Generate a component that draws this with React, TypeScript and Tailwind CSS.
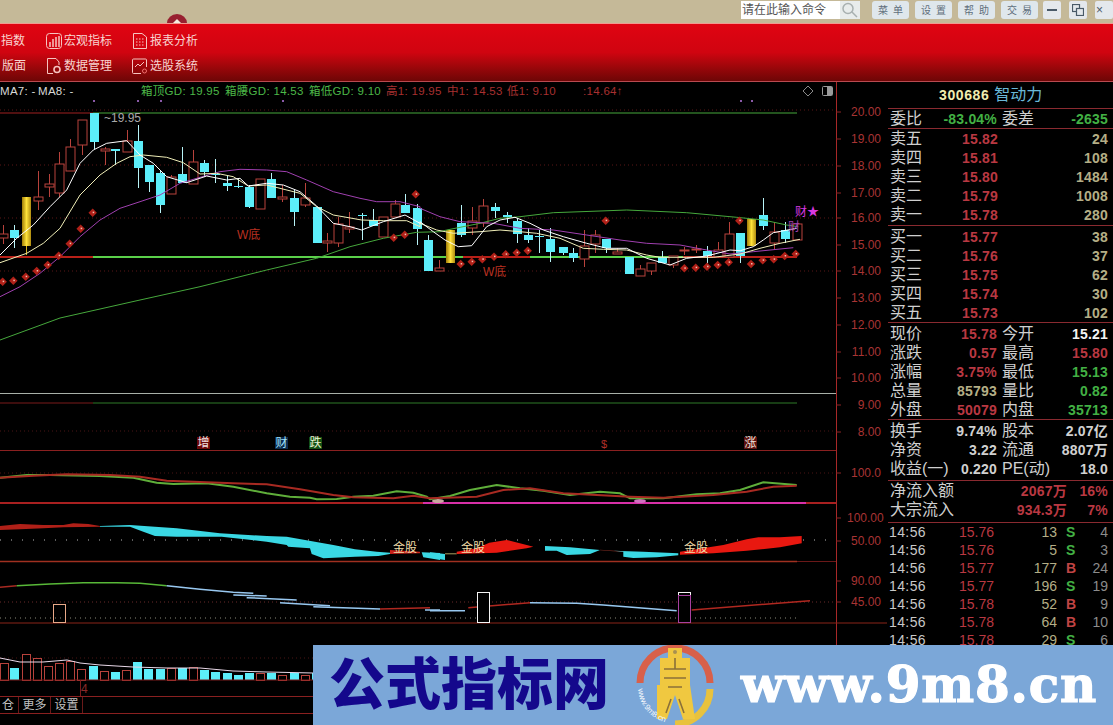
import type { ReactNode } from "react";

// points read off the reference, in zoomed crop coords (3x), moved back to page px
const z = (ox: number, oy: number, pts: number[][]) =>
  pts.map(([x, y]) => `${(ox + x / 3).toFixed(1)},${(oy + y / 3).toFixed(1)}`).join(" ");

type Candle = [number, number, number, number, number, "r" | "c" | "g"];

const CANDLES: Candle[] = [
  [3, 234, 238, 225, 244, "r"], [14, 230, 238, 225, 248, "c"], [26, 197, 246, 197, 255, "g"],
  [38, 197, 201, 171, 210, "r"], [49, 184, 187, 174, 197, "r"], [59, 164, 193, 152, 197, "r"],
  [70, 147, 171, 139, 171, "r"], [82, 120, 145, 120, 155, "r"], [94, 113, 142, 113, 149, "c"],
  [105, 149, 151, 147, 165, "r"], [115, 149, 151, 149, 165, "c"], [127, 141, 152, 130, 152, "r"],
  [138, 141, 168, 125, 188, "c"], [149, 165, 182, 165, 192, "c"], [160, 173, 205, 170, 213, "c"],
  [171, 177, 194, 175, 194, "r"], [182, 174, 183, 147, 183, "c"], [193, 162, 184, 150, 184, "r"],
  [204, 163, 172, 160, 177, "c"], [215, 174, 175, 159, 183, "c"], [227, 183, 186, 175, 191, "c"],
  [238, 186, 187, 178, 188, "c"], [249, 187, 207, 185, 208, "c"], [260, 179, 209, 179, 209, "r"],
  [271, 179, 198, 173, 198, "c"], [282, 197, 199, 185, 202, "r"], [294, 198, 212, 190, 226, "c"],
  [305, 198, 205, 183, 207, "r"], [317, 207, 243, 207, 243, "c"], [327, 241, 243, 233, 252, "r"],
  [338, 224, 243, 217, 247, "r"], [349, 227, 229, 212, 233, "r"], [362, 215, 216, 213, 240, "c"],
  [373, 220, 226, 209, 226, "c"], [383, 217, 237, 217, 237, "r"], [395, 204, 217, 200, 217, "r"],
  [405, 205, 213, 194, 213, "c"], [417, 208, 229, 204, 245, "c"], [428, 240, 271, 235, 271, "c"],
  [439, 268, 271, 260, 271, "r"], [450, 230, 263, 230, 263, "g"], [461, 223, 235, 205, 237, "c"],
  [472, 221, 228, 207, 235, "r"], [483, 206, 223, 199, 227, "r"], [495, 207, 211, 203, 218, "c"],
  [507, 215, 217, 212, 223, "c"], [517, 221, 234, 218, 243, "c"], [528, 235, 240, 228, 243, "c"],
  [539, 236, 237, 230, 253, "c"], [550, 239, 252, 228, 262, "c"], [563, 247, 253, 247, 255, "c"],
  [573, 253, 258, 248, 262, "c"], [584, 246, 259, 230, 267, "r"], [595, 235, 244, 230, 253, "r"],
  [606, 239, 248, 239, 253, "c"], [617, 252, 254, 248, 254, "r"], [629, 257, 274, 257, 274, "c"],
  [640, 269, 276, 265, 276, "r"], [651, 263, 271, 263, 275, "r"], [662, 257, 263, 251, 263, "c"],
  [673, 256, 265, 256, 268, "r"], [684, 250, 251, 247, 255, "r"], [696, 249, 250, 245, 253, "r"],
  [707, 251, 256, 246, 263, "c"], [718, 250, 257, 242, 258, "r"], [729, 234, 257, 222, 257, "r"],
  [740, 233, 256, 233, 263, "c"], [751, 219, 246, 219, 246, "g"], [763, 215, 226, 198, 230, "c"],
  [774, 232, 243, 222, 250, "r"], [785, 230, 239, 222, 243, "c"], [797, 224, 240, 224, 240, "r"],
];

const DOTS = [
  ...[[8, 545], [40, 542], [77, 530], [110, 513], [143, 495], [176, 467], [209, 431], [242, 386], [278, 338], [1181, 413], [1214, 404], [1247, 283]].map(([x, y]) => [x / 3, 100 + y / 3]),
  ...[[122, 252], [155, 245], [187, 238], [222, 230], [257, 223], [290, 218], [323, 212], [557, 122], [793, 265], [827, 263], [861, 260], [893, 255], [926, 247], [958, 122], [993, 252], [1028, 241], [1061, 238], [1094, 228], [1127, 222]].map(([x, y]) => [420 + x / 3, 180 + y / 3]),
];

const VOLUME: [number, number, "r" | "c"][] = [
  [0, 663, "r"], [10, 668, "c"], [22, 654, "r"], [33, 658, "r"], [44, 666, "r"], [55, 663, "r"],
  [66, 661, "r"], [77, 669, "r"], [89, 666, "c"], [100, 671, "r"], [111, 672, "c"], [122, 670, "r"],
  [133, 662, "c"], [144, 669, "c"], [156, 669, "c"], [167, 668, "r"], [178, 668, "c"], [189, 667, "r"],
  [200, 670, "c"], [211, 672, "c"], [223, 673, "c"], [234, 675, "c"], [245, 673, "c"], [256, 673, "r"],
  [267, 673, "c"], [278, 675, "r"], [290, 673, "c"], [301, 675, "r"], [312, 673, "c"],
];

const AXIS: [string, number][] = [
  ["20.00", 112], ["19.00", 139], ["18.00", 166], ["17.00", 193], ["16.00", 218], ["15.00", 245],
  ["14.00", 271], ["13.00", 298], ["12.00", 325], ["11.00", 352], ["10.00", 378], ["9.00", 405],
  ["8.00", 432], ["100.0", 473], ["100.00", 518], ["50.00", 541], ["90.00", 581], ["45.00", 602],
];

// money band pieces, left crop then right crop
const BANDS_L: [string, number[][]][] = [
  ["#b02018", [[0, 288], [60, 282], [130, 285], [190, 285], [220, 280], [265, 282], [300, 288], [300, 290], [190, 292], [130, 295], [60, 298], [0, 300]]],
  ["#3ad8e4", [[300, 288], [390, 285], [465, 290], [530, 295], [660, 310], [800, 318], [860, 320], [1000, 345], [1065, 358], [1130, 365], [1170, 368], [1170, 372], [1135, 378], [1065, 380], [970, 385], [935, 372], [930, 355], [865, 350], [860, 345], [800, 335], [665, 320], [530, 320], [465, 318], [430, 305], [390, 290], [300, 290]]],
  ["#c82018", [[1170, 360], [1260, 365], [1260, 370], [1170, 372]]],
  ["#3ad8e4", [[1265, 367], [1320, 369], [1320, 390], [1270, 382]]],
];
const BANDS_R: [string, number[][]][] = [
  ["#3ad8e4", [[0, 367], [45, 372], [45, 390], [10, 385], [0, 380]]],
  ["#a8a060", [[45, 370], [80, 370], [80, 373], [45, 373]]],
  ["#e81810", [[80, 365], [140, 355], [178, 338], [230, 330], [290, 345], [310, 350], [290, 355], [200, 368], [80, 372]]],
  ["#3ad8e4", [[345, 348], [420, 352], [510, 360], [480, 372], [410, 375], [380, 362], [345, 362]]],
  ["#7a2a20", [[510, 359], [580, 364], [580, 366], [510, 361]]],
  ["#3ad8e4", [[550, 362], [640, 365], [745, 370], [745, 376], [680, 382], [610, 384], [580, 380], [580, 365]]],
  ["#e81810", [[750, 365], [880, 345], [950, 328], [985, 322], [1050, 322], [1115, 318], [1115, 340], [1050, 352], [950, 362], [850, 370], [750, 374]]],
];

const Chart = () => (
  <svg width={887} height={596} viewBox="0 100 887 596" className="block shrink-0">
    <defs>
      <linearGradient id="gold" x1="0" x2="1" y1="0" y2="0">
        <stop offset="0" stopColor="#a07c08" />
        <stop offset="0.5" stopColor="#ffe23a" />
        <stop offset="1" stopColor="#b08c10" />
      </linearGradient>
    </defs>

    {/* grid */}
    {[110, 165, 218, 271].map((y) => (
      <line key={y} x1={0} x2={836} y1={y} y2={y} stroke="#5a1616" strokeDasharray="1 3" />
    ))}
    <line x1={0} x2={836} y1={431} y2={431} stroke="#4a1414" strokeDasharray="1 3" />
    {[93, 137, 160, 282, 740, 751].map((x) => (
      <rect key={x} x={x} y={100} width={2} height={2} fill="#8a5aa8" />
    ))}

    {/* main levels */}
    <line x1={0} x2={93} y1={113} y2={113} stroke="#a02020" />
    <line x1={93} x2={797} y1={113} y2={113} stroke="#46a83c" />
    <line x1={0} x2={93} y1={257} y2={257} stroke="#b82018" strokeWidth={2} />
    <line x1={93} x2={463} y1={257} y2={257} stroke="#5bd04a" strokeWidth={2} />
    <line x1={463} x2={530} y1={257} y2={257} stroke="#b82018" strokeWidth={2} />
    <line x1={530} x2={683} y1={257} y2={257} stroke="#5bd04a" strokeWidth={2} />
    <line x1={683} x2={797} y1={257} y2={257} stroke="#b82018" strokeWidth={2} />

    {/* candles */}
    {CANDLES.map(([x, top, bot, wt, wb, t]) => {
      const c = t === "c" ? "#5ceefa" : t === "g" ? "#d8b020" : "#b8423c";
      return (
        <g key={x}>
          <line x1={x + 0.5} x2={x + 0.5} y1={wt} y2={wb} stroke={t === "c" ? "#b8f4f8" : c} />
          <rect
            x={x - 4}
            y={top}
            width={9}
            height={Math.max(bot - top, 1)}
            fill={t === "c" ? c : t === "g" ? "url(#gold)" : "#000"}
            stroke={t === "r" ? c : "none"}
          />
        </g>
      );
    })}

    {/* moving averages */}
    <g fill="none">
      <polyline stroke="#46a83c" points={`0,340 60,318 ${z(0, 100, [[420, 600], [600, 560], [800, 510], [950, 475], [1050, 440], [1150, 415], [1250, 397], [1320, 395]])} ${z(420, 180, [[80, 150], [180, 130], [240, 115], [300, 110], [400, 98], [540, 93], [620, 90], [800, 98], [950, 112], [1030, 120], [1100, 135], [1135, 140]])}`} />
      <polyline stroke="#a040b0" points={`${z(0, 100, [[0, 590], [60, 560], [120, 520], [180, 470], [240, 410], [300, 360], [360, 325], [420, 305], [480, 285], [540, 250], [600, 232], [660, 215], [720, 208], [800, 210], [860, 215], [920, 240], [1000, 275], [1080, 295], [1130, 305], [1200, 305], [1260, 320]])} ${z(420, 180, [[0, 85], [60, 110], [120, 125], [220, 130], [300, 145], [400, 150], [500, 165], [600, 180], [680, 190], [780, 195], [860, 210], [930, 222], [1000, 215], [1120, 203]])}`} />
      <polyline stroke="#f0eeb8" points={`${z(0, 100, [[0, 488], [80, 460], [130, 430], [180, 385], [240, 285], [300, 225], [350, 190], [390, 170], [430, 165], [500, 172], [550, 188], [600, 222], [650, 220], [700, 230], [745, 258], [800, 255], [900, 280], [950, 320], [1000, 345], [1085, 360], [1150, 362], [1220, 362], [1260, 380]])} ${z(420, 180, [[0, 130], [50, 150], [100, 160], [180, 155], [240, 150], [300, 155], [350, 160], [420, 175], [490, 205], [550, 208], [620, 210], [680, 225], [720, 232], [800, 232], [880, 232], [960, 222], [1020, 205], [1080, 190], [1140, 178]])}`} />
      <polyline stroke="#ffffff" points={`${z(0, 100, [[0, 465], [50, 415], [100, 375], [150, 320], [200, 270], [240, 190], [280, 150], [320, 130], [380, 122], [420, 165], [460, 190], [500, 230], [560, 248], [620, 228], [680, 240], [720, 235], [745, 258], [800, 250], [850, 255], [900, 275], [950, 318], [1000, 370], [1050, 380], [1085, 390], [1150, 365], [1215, 345], [1260, 370]])} ${z(420, 180, [[0, 125], [40, 155], [75, 180], [115, 200], [155, 197], [200, 140], [240, 120], [285, 112], [330, 130], [370, 150], [430, 170], [500, 190], [560, 205], [620, 205], [680, 235], [750, 255], [800, 235], [860, 228], [930, 210], [961, 212], [1000, 200], [1030, 180], [1060, 158], [1130, 145]])}`} />
    </g>

    {DOTS.map(([x, y]) => (
      <g key={`${x}-${y}`}>
        <rect x={x - 3} y={y - 3} width={6} height={6} fill="#b02018" transform={`rotate(45 ${x} ${y})`} />
        <rect x={x} y={y - 1} width={1.5} height={1.5} fill="#f0c0b0" />
      </g>
    ))}

    <g fontSize={12} fontFamily="Liberation Sans, Noto Sans CJK SC, sans-serif">
      <text x={104} y={122} fill="#a8a8a8">~19.95</text>
      <text x={237} y={239} fill="#b83020">W底</text>
      <text x={483} y={276} fill="#b83020">W底</text>
      <text x={788} y={231} fill="#a040b0">财</text>
      <text x={795} y={216} fill="#d838e0">财★</text>

      {/* signal row */}
      <rect x={197} y={437} width={13} height={12} fill="#6a0808" />
      <text x={197.5} y={447} fill="#f0e0e0">增</text>
      <rect x={275} y={437} width={13} height={12} fill="#0c2c50" />
      <text x={275.5} y={447} fill="#a0e0f8">财</text>
      <rect x={309} y={437} width={13} height={12} fill="#145014" />
      <text x={309.5} y={447} fill="#e8f0d0">跌</text>
      <text x={601} y={448} fill="#b03028" fontSize={11}>$</text>
      <rect x={744} y={437} width={13} height={12} fill="#5a1010" />
      <text x={744.5} y={447} fill="#f0e0d8">涨</text>
      <text x={81} y={693} fill="#8a2a2a">4</text>
    </g>

    {/* panel separators */}
    <line x1={0} x2={836} y1={393.5} y2={393.5} stroke="#a8b0a8" />
    <line x1={0} x2={93} y1={403} y2={403} stroke="#7a1a1a" />
    <line x1={93} x2={797} y1={403} y2={403} stroke="#2f7a28" />
    <line x1={0} x2={836} y1={450.5} y2={450.5} stroke="#8a2020" />
    <line x1={0} x2={836} y1={473} y2={473} stroke="#4a1414" strokeDasharray="1 3" />

    {/* second panel */}
    <line x1={0} x2={836} y1={503} y2={503} stroke="#a82020" strokeWidth={2} />
    <line x1={423} x2={806} y1={503} y2={503} stroke="#d830a8" strokeWidth={2} />
    <ellipse cx={438} cy={501} rx={6} ry={2} fill="#c8a8a0" />
    <ellipse cx={640} cy={501} rx={6} ry={2} fill="#d070c0" />
    <polyline fill="none" stroke="#5fae3a" strokeWidth={2} points={`${z(0, 430, [[0, 143], [80, 135], [150, 135], [300, 138], [400, 143], [470, 158], [520, 162], [620, 160], [700, 170], [800, 190], [870, 200], [930, 203], [950, 208], [1010, 207], [1060, 200], [1120, 197], [1190, 184], [1240, 188], [1280, 200]])} ${z(430, 430, [[0, 208], [60, 198], [120, 180], [200, 165], [270, 175], [340, 182], [420, 195], [510, 185], [570, 190], [600, 205], [700, 205], [800, 193], [870, 190], [930, 180], [1000, 157], [1100, 165]])}`} />
    <polyline fill="none" stroke="#a82a22" strokeWidth={2} points={`${z(0, 430, [[0, 143], [100, 137], [200, 133], [330, 135], [420, 140], [500, 152], [600, 156], [700, 160], [800, 163], [900, 178], [1000, 195], [1060, 202], [1180, 205], [1240, 197]])} ${z(430, 430, [[0, 205], [140, 200], [220, 180], [300, 175], [400, 190], [500, 195], [600, 200], [700, 203], [850, 195], [950, 185], [1030, 170], [1100, 167]])}`} />

    {/* third panel: money band */}
    <line x1={0} x2={836} y1={540} y2={540} stroke="#b8b8b8" strokeDasharray="1 10" />
    <line x1={0} x2={797} y1={561.5} y2={561.5} stroke="#a03020" strokeWidth={1.5} />
    <line x1={797} x2={836} y1={561.5} y2={561.5} stroke="#6a1818" />
    {BANDS_L.map(([fill, pts], i) => (
      <polygon key={i} fill={fill} points={z(0, 430, pts)} />
    ))}
    {BANDS_R.map(([fill, pts], i) => (
      <polygon key={i} fill={fill} points={z(430, 430, pts)} />
    ))}
    <g fontSize={12} fontFamily="Liberation Sans, Noto Sans CJK SC, sans-serif" fill="#f0dca8">
      <text x={393} y={552}>金股</text>
      <text x={461} y={552}>金股</text>
      <text x={684} y={552}>金股</text>
    </g>

    {/* fourth panel */}
    <line x1={0} x2={836} y1={602} y2={602} stroke="#6a2a2a" strokeDasharray="1 3" />
    <line x1={0} x2={800} y1={618} y2={618} stroke="#8a8a7a" strokeDasharray="1 4" />
    <line x1={0} x2={836} y1={623} y2={623} stroke="#8a2418" />
    <polyline fill="none" stroke="#a82a22" strokeWidth={1.5} points={z(0, 430, [[0, 472], [50, 467]])} />
    <polyline fill="none" stroke="#58b838" strokeWidth={1.5} points={z(0, 430, [[50, 467], [150, 462], [250, 458], [350, 458], [420, 460], [500, 467]])} />
    <polyline fill="none" stroke="#98c8f0" strokeWidth={1.5} points={`${z(0, 430, [[500, 467], [600, 478], [700, 487], [760, 490]])}`} />
    {[[700, 495, 800, 498], [740, 503, 890, 510], [840, 518, 990, 527], [940, 530, 1140, 537], [1275, 540, 1320, 540]].map(([a, b, c, d]) => (
      <line key={a} x1={a / 3} y1={430 + b / 3} x2={c / 3} y2={430 + d / 3} stroke="#98c8f0" strokeWidth={1.5} />
    ))}
    <polyline fill="none" stroke="#98c8f0" strokeWidth={1.5} points={z(430, 430, [[0, 542], [105, 542]])} />
    <polyline fill="none" stroke="#98c8f0" strokeWidth={1.5} points={z(430, 430, [[300, 518], [440, 520], [520, 525], [740, 542]])} />
    <polyline fill="none" stroke="#b02820" strokeWidth={1.5} points={z(0, 430, [[1140, 537], [1290, 533]])} />
    <polyline fill="none" stroke="#b02820" strokeWidth={1.5} points={z(430, 430, [[115, 533], [300, 518]])} />
    <polyline fill="none" stroke="#b02820" strokeWidth={1.5} points={z(430, 430, [[785, 540], [1140, 512]])} />
    <rect x={53.5} y={604.5} width={12} height={18} fill="none" stroke="#e8a888" />
    <rect x={477.5} y={592.5} width={12} height={30} fill="#000" stroke="#f4f4f4" />
    <rect x={678.5} y={592.5} width={12} height={30} fill="#000" stroke="#f4f4f4" />
    <rect x={678.5} y={595.5} width={12} height={27} fill="#000" stroke="#a840a0" />

    {/* volume panel */}
    <line x1={0} x2={836} y1={658} y2={658} stroke="#4a1414" strokeDasharray="1 3" />
    {VOLUME.map(([x, top, t]) => (
      <rect
        key={x}
        x={x + (t === "r" ? 0.5 : 0)}
        y={top + (t === "r" ? 0.5 : 0)}
        width={t === "r" ? 8 : 9}
        height={680 - top}
        fill={t === "c" ? "#5ceefa" : "#000"}
        stroke={t === "r" ? "#b8423c" : "none"}
      />
    ))}
    <line x1={0} x2={836} y1={680} y2={680} stroke="#7a1a1a" />
    <line x1={80.5} x2={80.5} y1={680} y2={696} stroke="#7a1a1a" />
    <polyline fill="none" stroke="#e8d8e8" points={`0,658 20,662 43,662 67,660 80,663 100,665 133,667 167,668 200,668 233,671 267,672 313,673`} />

    {/* price axis */}
    <line x1={836.5} x2={836.5} y1={100} y2={696} stroke="#a82828" />
    <line x1={887.5} x2={887.5} y1={100} y2={696} stroke="#a82828" />
    <line x1={836} x2={887} y1={623} y2={623} stroke="#8a2418" />
    {AXIS.map(([label, y]) => (
      <g key={label}>
        <line x1={836} x2={841} y1={y} y2={y} stroke="#8a2424" />
        <text x={label.length > 5 ? 847 : 881} y={y + 4} textAnchor={label.length > 5 ? "start" : "end"} fill="#a83434" fontSize={12} fontFamily="Liberation Sans, sans-serif">
          {label}
        </text>
      </g>
    ))}
  </svg>
);

const green = "text-[#42b044]";
const red = "text-[#b93842]";
const khaki = "text-[#b4ae86]";
const white = "text-[#d0d0d0]";
const num = "text-[14px] font-bold tracking-[0.2px]";
const label = "text-[16px] font-normal text-[#cfcfcf] whitespace-nowrap";

const OrderRow = ({ name, price, vol }: { name: string; price: string; vol: string }) => (
  <div className="grid h-[19px] grid-cols-[72px_35px_1fr] items-center pl-[2px] pr-[5px] leading-none">
    <span className={label}>{name}</span>
    <span className={`${num} ${red} text-right`}>{price}</span>
    <span className={`${num} ${khaki} text-right`}>{vol}</span>
  </div>
);

const InfoRow = ({ cells }: { cells: [string, string, string, string, string, string] }) => (
  <div className="grid h-[19px] grid-cols-[40px_67px_45px_1fr] items-center pl-[2px] pr-[5px] leading-none">
    <span className={label}>{cells[0]}</span>
    <span className={`${num} ${cells[1]} text-right whitespace-nowrap`}>{cells[2]}</span>
    <span className={`${label} pl-[5px]`}>{cells[3]}</span>
    <span className={`${num} ${cells[4]} text-right whitespace-nowrap`}>{cells[5]}</span>
  </div>
);

const TickRow = ({ p, v, f, n }: { p: string; v: string; f: string; n: string }) => (
  <div className="grid h-[18px] grid-cols-[68px_37px_63px_30px_1fr] items-center pl-[1px] pr-[5px] text-[14px] leading-none">
    <span className="text-[#c8c8c8] tracking-[0.4px]">14:56</span>
    <span className={`${red} text-right`}>{p}</span>
    <span className={`${khaki} text-right`}>{v}</span>
    <span className={`${f === "S" ? green : "text-[#c04444]"} pl-[9px] font-bold`}>{f}</span>
    <span className="text-right text-[#8c8c8c]">{n}</span>
  </div>
);

const Rule = () => <div className="h-px shrink-0 bg-[#8a2a30]" />;

const QuotePanel = () => (
  <aside className="flex w-[225px] flex-col">
    <div className="flex h-[26px] items-center gap-[5px] pl-[51px]">
      <span className="text-[14px] font-bold tracking-[0.6px] text-[#f0ecb0]">300686</span>
      <span className="text-[16px] text-[#6ab8d8]">智动力</span>
    </div>
    <Rule />
    <InfoRow cells={["委比", green, "-83.04%", "委差", green, "-2635"]} />
    <Rule />
    <div>
      <OrderRow name="卖五" price="15.82" vol="24" />
      <OrderRow name="卖四" price="15.81" vol="108" />
      <OrderRow name="卖三" price="15.80" vol="1484" />
      <OrderRow name="卖二" price="15.79" vol="1008" />
      <OrderRow name="卖一" price="15.78" vol="280" />
    </div>
    <div className="h-px" />
    <Rule />
    <div className="pt-px">
      <OrderRow name="买一" price="15.77" vol="38" />
      <OrderRow name="买二" price="15.76" vol="37" />
      <OrderRow name="买三" price="15.75" vol="62" />
      <OrderRow name="买四" price="15.74" vol="30" />
      <OrderRow name="买五" price="15.73" vol="102" />
    </div>
    <Rule />
    <div className="pt-px">
      <InfoRow cells={["现价", red, "15.78", "今开", "text-[#f4f4f4]", "15.21"]} />
      <InfoRow cells={["涨跌", red, "0.57", "最高", red, "15.80"]} />
      <InfoRow cells={["涨幅", red, "3.75%", "最低", green, "15.13"]} />
      <InfoRow cells={["总量", khaki, "85793", "量比", green, "0.82"]} />
      <InfoRow cells={["外盘", red, "50079", "内盘", green, "35713"]} />
    </div>
    <Rule />
    <div className="pt-px">
      <InfoRow cells={["换手", white, "9.74%", "股本", white, "2.07亿"]} />
      <InfoRow cells={["净资", white, "3.22", "流通", white, "8807万"]} />
      <InfoRow cells={["收益(一)", white, "0.220", "PE(动)", white, "18.0"]} />
    </div>
    <div className="h-[2px]" />
    <Rule />
    <div className="grid h-[19px] grid-cols-[64px_113px_1fr] items-center pl-[2px] pr-[5px] leading-none">
      <span className={label}>净流入额</span>
      <span className={`${num} ${red} text-right`}>2067万</span>
      <span className={`${num} ${red} text-right`}>16%</span>
    </div>
    <div className="grid h-[19px] grid-cols-[64px_113px_1fr] items-center pl-[2px] pr-[5px] leading-none">
      <span className={label}>大宗流入</span>
      <span className={`${num} ${red} text-right`}>934.3万</span>
      <span className={`${num} ${red} text-right`}>7%</span>
    </div>
    <div className="h-[3px]" />
    <Rule />
    <TickRow p="15.76" v="13" f="S" n="4" />
    <TickRow p="15.76" v="5" f="S" n="3" />
    <TickRow p="15.77" v="177" f="B" n="24" />
    <TickRow p="15.77" v="196" f="S" n="19" />
    <TickRow p="15.78" v="52" f="B" n="9" />
    <TickRow p="15.78" v="64" f="B" n="10" />
    <TickRow p="15.78" v="29" f="S" n="6" />
  </aside>
);

const ToolIcon = ({ children }: { children: ReactNode }) => (
  <svg width={16} height={16} viewBox="0 0 16 16" fill="none" stroke="#f6c4c0" strokeWidth={1} className="shrink-0">
    {children}
  </svg>
);

const ToolItem = ({ icon, text }: { icon: ReactNode; text: string }) => (
  <div className="flex items-center gap-[2px]">
    <ToolIcon>{icon}</ToolIcon>
    <span className="text-[12px] text-[#f8d4d0]">{text}</span>
  </div>
);

const Toolbar = () => (
  <div className="h-[59px] border-t border-b border-t-[#f09a90] border-b-[#b84a50] bg-gradient-to-b from-[#e00412] via-[#d00410] to-[#6e0606] pt-[2px]">
    <div className="grid h-full grid-cols-[46px_86px_1fr] grid-rows-[25px_25px] content-center">
      <span className="flex items-center pl-px text-[12px] whitespace-nowrap text-[#f8d4d0]">指数</span>
      <ToolItem
        text="宏观指标"
        icon={
          <>
            <rect x={0.5} y={0.5} width={15} height={15} rx={3} />
            <path d="M4 14V9M7 14V6M10 14V4M13 14V3" strokeWidth={1.5} />
          </>
        }
      />
      <ToolItem
        text="报表分析"
        icon={
          <>
            <path d="M1.5 .5H10L14.5 4V15.5H1.5Z" />
            <path d="M4 6H13M4 9H13M4 12H13" strokeDasharray="1.5 1.5" />
          </>
        }
      />
      <span className="flex items-center pl-[2px] text-[12px] whitespace-nowrap text-[#f8d4d0]">版面</span>
      <ToolItem
        text="数据管理"
        icon={
          <>
            <path d="M7 15.5H1.5V.5H10L13 4V7" />
            <circle cx={11} cy={11.5} r={3} strokeWidth={1.6} />
          </>
        }
      />
      <ToolItem
        text="选股系统"
        icon={
          <>
            <path d="M9 15.5H1.5A1 1 0 0 1 .5 14.5V2A1 1 0 0 1 1.5 1H13.5A1 1 0 0 1 14.5 2V9" />
            <path d="M3 9L6 6L8 8L12 4" />
            <circle cx={12.5} cy={13} r={2} stroke="#f07070" />
          </>
        }
      />
    </div>
  </div>
);

const MenuButton = ({ text }: { text: string }) => (
  <button className="flex h-[18px] w-[37px] items-center justify-center gap-[5px] rounded-[3px] bg-[#dfe7ec] text-[10px] text-[#5f6f7c]">
    {text.split("").map((c) => (
      <span key={c}>{c}</span>
    ))}
  </button>
);

const TitleBar = () => (
  <div className="relative flex h-[23px] items-start bg-[#c5b998] pt-px pl-[741px]">
    <div className="flex h-[18px] w-[132px] items-center bg-white pl-px text-[12px] text-[#555]">
      请在此输入命令
      <svg width={20} height={18} viewBox="0 0 20 18" fill="none" stroke="#a8b0b0" strokeWidth={1.5} className="ml-auto shrink-0 bg-[#e8ecec]">
        <circle cx={8} cy={7.5} r={5} />
        <path d="M12 11L17 16" />
      </svg>
    </div>
    <div className="ml-[12px] flex gap-[6px]">
      <MenuButton text="菜单" />
      <MenuButton text="设置" />
      <MenuButton text="帮助" />
      <MenuButton text="交易" />
    </div>
    <div className="ml-[5px] flex gap-[8px]">
      <div className="flex h-[18px] w-[18px] items-center justify-center rounded-[2px] bg-[#e4e8ec]">
        <div className="h-[2px] w-[10px] bg-[#4a5a68]" />
      </div>
      <div className="flex h-[18px] w-[18px] items-center justify-center rounded-[2px] bg-[#e4e8ec]">
        <svg width={12} height={12} viewBox="0 0 12 12" fill="none" stroke="#4a5a68" strokeWidth={1.2}>
          <rect x={0.5} y={0.5} width={7} height={7} />
          <rect x={4.5} y={4.5} width={7} height={7} fill="#e4e8ec" />
        </svg>
      </div>
      <div className="h-[18px] w-[18px] rounded-[2px] bg-[#e4e8ec] pl-[1px] text-[12px] leading-[18px] text-[#4a5a68]">×</div>
    </div>
    <svg width={20} height={9} viewBox="0 0 20 9" className="absolute top-[14px] left-[167px]">
      <path d="M0 9A10 9 0 0 1 20 9Z" fill="#982030" />
      <path d="M6 9L10 5L14 9Z" fill="#f4ece0" />
    </svg>
  </div>
);

const HeaderText = ({ x, color, children }: { x: number; color: string; children: ReactNode }) => (
  <span className={`absolute top-[2px] whitespace-nowrap ${color}`} style={{ left: x }}>
    {children}
  </span>
);

const ChartHeader = () => (
  <div className="relative h-[18px] w-[837px] shrink-0 border-r border-r-[#a82828] text-[11.5px] leading-[14px] tracking-[0.3px]">
    <HeaderText x={0} color="text-[#d8d8d8]">MA7: -</HeaderText>
    <HeaderText x={38} color="text-[#d8d8d8]">MA8: -</HeaderText>
    <HeaderText x={141} color="text-[#4cb848]">箱顶GD: 19.95</HeaderText>
    <HeaderText x={225} color="text-[#4cb848]">箱腰GD: 14.53</HeaderText>
    <HeaderText x={309} color="text-[#4cb848]">箱低GD: 9.10</HeaderText>
    <HeaderText x={386} color="text-[#a83030]">高1: 19.95</HeaderText>
    <HeaderText x={447} color="text-[#a83030]">中1: 14.53</HeaderText>
    <HeaderText x={507} color="text-[#a83030]">低1: 9.10</HeaderText>
    <HeaderText x={583} color="text-[#a83030]">:14.64↑</HeaderText>
    <svg width={36} height={14} viewBox="0 0 36 14" className="absolute top-[2px] left-[802px]">
      <path d="M6 2L11 7L6 12L1 7Z" fill="none" stroke="#8a8a8a" />
      <rect x={20.5} y={2.5} width={10} height={9} rx={1} fill="none" stroke="#9a9a9a" />
      <rect x={25} y={3} width={5} height={8} fill="#9a9a9a" />
    </svg>
  </div>
);

const Tabs = () => (
  <div className="flex h-[18px] border-y border-y-[#8a2020] text-[12px] leading-[16px] text-[#c0c0c0]">
    <span className="w-[19px] border-r border-r-[#6a1a1a] pl-[2px]">仓</span>
    <span className="w-[32px] border-r border-r-[#6a1a1a] text-center">更多</span>
    <span className="w-[32px] border-r border-r-[#6a1a1a] text-center">设置</span>
  </div>
);

const Banner = () => (
  <div className="absolute top-[645px] right-0 bottom-0 left-[313px] flex items-center bg-[#7ba7d8]">
    <span className="ml-[16px] w-[306px] text-[56px] leading-none font-black text-[#14088c]">公式指标网</span>
    <svg width={80} height={80} viewBox="0 0 80 80" className="shrink-0">
      <path id="ring" d="M3 44A37 37 0 0 0 34 78" fill="none" />
      <path d="M5 38A35 35 0 0 1 75 38" fill="none" stroke="#d8604a" strokeWidth={7} />
      <path d="M75 44A35 35 0 0 1 40 79" fill="none" stroke="#e8c23e" strokeWidth={7} />
      <path d="M25 13H33V3H47V13H55V40L60 74H48L40 50L32 74H22V40H25Z" fill="#f0c840" />
      <path d="M29 24H51M29 33H51M33 42H47M40 13V24M36 54L31 68M44 54L49 68" stroke="#8a7038" strokeWidth={1.6} fill="none" />
      <circle cx={40} cy={7} r={2} fill="#a89050" />
      <text fontSize={8} fill="#f4f8fc" fontFamily="Liberation Sans, sans-serif">
        <textPath href="#ring">www.9m8.cn</textPath>
      </text>
    </svg>
    <span className="ml-[26px] font-['DejaVu_Serif',serif] text-[50px] leading-none font-bold tracking-[0.8px] whitespace-nowrap text-white [-webkit-text-stroke:1.2px_white]">www.9m8.cn</span>
  </div>
);

export default function App() {
  return (
    <div className="relative h-[725px] w-[1113px] overflow-hidden bg-black font-['Liberation_Sans','Noto_Sans_CJK_SC',sans-serif]">
      <TitleBar />
      <Toolbar />
      <div className="flex">
        <div className="flex w-[888px] shrink-0 flex-col">
          <ChartHeader />
          <Chart />
          <Tabs />
        </div>
        <QuotePanel />
      </div>
      <Banner />
    </div>
  );
}
